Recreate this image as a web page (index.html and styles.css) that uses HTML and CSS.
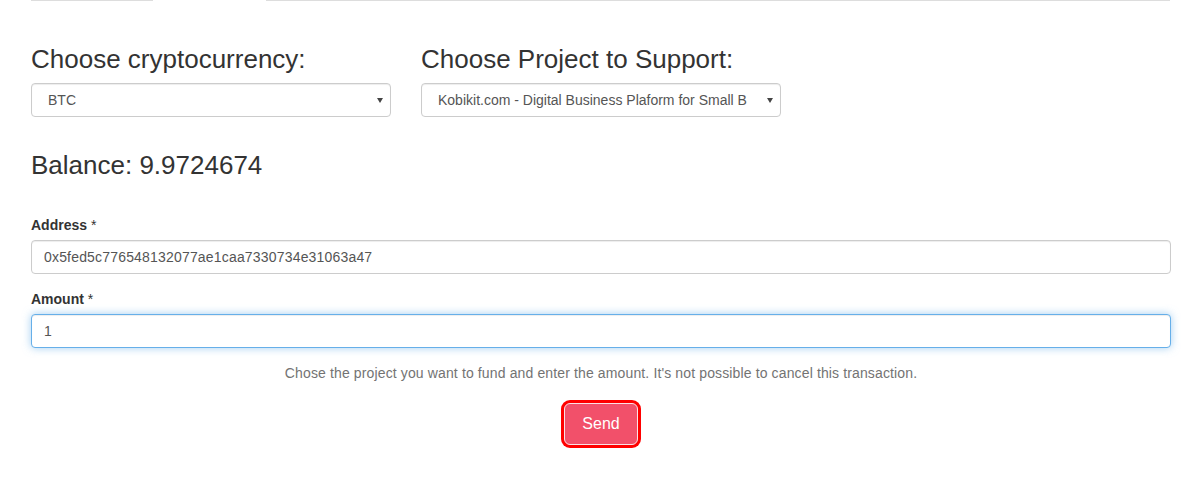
FILE: index.html
```html
<!DOCTYPE html>
<html lang="en">
<head>
<meta charset="utf-8">
<title>Send crypto</title>
<link rel="stylesheet" href="styles.css">
</head>
<body>
<div class="container">
  <div class="tabs-line">
    <span class="tab-border tab-border-first"></span>
    <span class="tab-gap"></span>
    <span class="tab-border tab-border-rest"></span>
  </div>

  <div class="choose-row">
    <div class="choose-col">
      <h3 class="choose-title">Choose cryptocurrency:</h3>
      <div class="select-wrap">
        <select class="form-select">
          <option>BTC</option>
          <option>ETH</option>
        </select>
        <span class="select-arrow"></span>
      </div>
    </div>
    <div class="choose-col">
      <h3 class="choose-title">Choose Project to Support:</h3>
      <div class="select-wrap">
        <select class="form-select">
          <option>Kobikit.com - Digital Business Plaform for Small Business</option>
        </select>
        <span class="select-arrow"></span>
      </div>
    </div>
  </div>

  <h3 class="balance">Balance: 9.9724674</h3>

  <form class="send-form">
    <div class="form-group">
      <label class="form-label" for="address">Address <span class="req">*</span></label>
      <input id="address" class="form-input" type="text" value="0x5fed5c776548132077ae1caa7330734e31063a47">
    </div>
    <div class="form-group">
      <label class="form-label" for="amount">Amount <span class="req">*</span></label>
      <input id="amount" class="form-input form-input-focused" type="text" value="1" autofocus>
    </div>
    <p class="help-text">Chose the project you want to fund and enter the amount. It's not possible to cancel this transaction.</p>
    <div class="actions">
      <button type="button" class="btn-send">Send</button>
    </div>
  </form>
</div>
</body>
</html>
```

FILE: styles.css
```css
* {
  box-sizing: border-box;
}

html, body {
  margin: 0;
  padding: 0;
  background: #fff;
}

body {
  font-family: "Liberation Sans", Arial, Helvetica, sans-serif;
  font-size: 14px;
  line-height: 20px;
  color: #333;
}

.container {
  width: 1140px;
  margin-left: 31px;
}

.tabs-line {
  display: flex;
  height: 1px;
}

.tab-border {
  height: 1px;
  background: #ddd;
}

.tab-border-first {
  width: 122px;
}

.tab-gap {
  width: 113px;
}

.tab-border-rest {
  width: 904px;
}

.choose-row {
  display: flex;
  gap: 30px;
  margin-top: 44px;
}

.choose-col {
  width: 360px;
}

.choose-title {
  margin: 0 0 9px;
  font-size: 26px;
  line-height: 29px;
  font-weight: 400;
  color: #333;
}

.select-wrap {
  position: relative;
  width: 360px;
}

.form-select {
  display: block;
  width: 100%;
  height: 34px;
  margin: 0;
  padding: 0 33px 0 16px;
  font-family: inherit;
  font-size: 14px;
  color: #555;
  background: #fff;
  border: 1px solid #ccc;
  border-radius: 4px;
  box-shadow: inset 0 1px 1px rgba(0, 0, 0, 0.075);
  -webkit-appearance: none;
  appearance: none;
  outline: none;
}

.select-arrow {
  position: absolute;
  right: 8px;
  top: 15px;
  width: 0;
  height: 0;
  border-left: 3px solid transparent;
  border-right: 3px solid transparent;
  border-top: 5px solid #444;
  pointer-events: none;
}

.balance {
  margin: 34px 0 0;
  font-size: 26px;
  line-height: 29px;
  font-weight: 400;
  color: #333;
}

.send-form {
  margin-top: 35px;
}

.form-group {
  margin-bottom: 15px;
}

.form-label {
  display: block;
  margin-bottom: 5px;
  font-weight: 700;
  color: #333;
}

.req {
  font-weight: 400;
}

.form-input {
  display: block;
  width: 100%;
  height: 34px;
  margin: 0;
  padding: 6px 12px;
  font-family: inherit;
  font-size: 14px;
  letter-spacing: 0.18px;
  color: #555;
  background: #fff;
  border: 1px solid #ccc;
  border-radius: 4px;
  box-shadow: inset 0 1px 1px rgba(0, 0, 0, 0.075);
  outline: none;
  caret-color: #333;
}

.form-input-focused,
.form-input:focus {
  border-color: #66afe9;
  box-shadow: inset 0 1px 1px rgba(0, 0, 0, 0.075), 0 0 8px rgba(102, 175, 233, 0.6);
}

.help-text {
  margin: 15px 0 0;
  text-align: center;
  letter-spacing: 0.13px;
  color: #737373;
}

.actions {
  display: flex;
  justify-content: center;
  margin-top: 20px;
  padding-bottom: 6px;
}

.btn-send {
  height: 42px;
  padding: 0 17px;
  font-family: inherit;
  font-size: 16px;
  line-height: 20px;
  color: #fff;
  background: #f2506a;
  border: 1px solid #fbe0e4;
  border-radius: 6px;
  box-shadow: 0 0 0 3px #ff0000;
  cursor: pointer;
}
```
